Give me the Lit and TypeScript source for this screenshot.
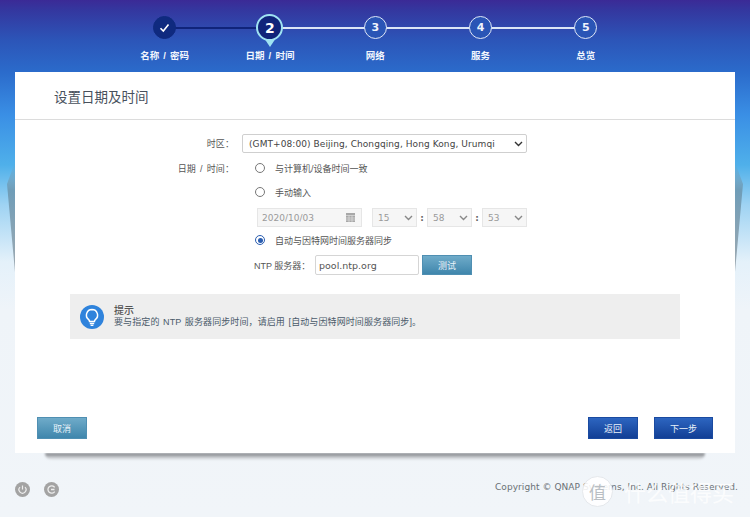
import { LitElement, html, css, svg } from "lit";
import { customElement } from "lit/decorators.js";

const CN = css`"Liberation Sans","Noto Sans CJK SC",sans-serif`;
const steps = [
  { n: "✓", label: "名称 / 密码", cls: "done" },
  { n: "2", label: "日期 / 时间", cls: "cur" },
  { n: "3", label: "网络", cls: "" },
  { n: "4", label: "服务", cls: "" },
  { n: "5", label: "总览", cls: "" },
];

@customElement("app-root")
export class AppRoot extends LitElement {
  static styles = css`
    :host { display: block; width: 750px; height: 517px; overflow: hidden; position: relative;
      font-family: "DejaVu Sans", "Noto Sans CJK SC", sans-serif; color: #444; }
    * { box-sizing: border-box; }
    .page { width: 750px; height: 517px; display: flex; flex-direction: column;
      background: linear-gradient(180deg, #3b2a96 0, #34379f 10px, #2c55b8 40px, #2b6bcb 72px, #3a8fe5 115px, #4fb0ea 165px, #9fd3f3 205px, #e4f1fa 262px, #eff4f9 310px, #f1f5f9 100%); }
    .wizard { height: 72px; flex: none; display: flex; padding-left: 112px; padding-top: 15px; }
    .step { width: 105.3px; flex: none; display: flex; flex-direction: column; align-items: center; position: relative; }
    .dot { width: 23px; height: 23px; border-radius: 50%; border: 1.5px solid #dfe7f7; color: #eef3fc;
      font: bold 11px "DejaVu Sans", sans-serif; display: flex; align-items: center; justify-content: center;
      background: #2a55b6; position: relative; z-index: 2; margin-top: 1px; }
    .done .dot { background: #0f2a7f; border-color: #0f2a7f; }
    .cur .dot { width: 27px; height: 27px; background: #10247a; border: 2px solid #9fe3f2; color: #fff; font-size: 14px; margin-top: -1px; }
    .pin { position: absolute; left: 50%; top: 20px; margin-left: -8px; width: 0; height: 0;
      border-left: 8px solid transparent; border-right: 8px solid transparent; border-top: 12px solid #9fe3f2; z-index: 1; }
    .link { position: absolute; left: 50%; width: 105.3px; top: 12px; height: 2px; background: #dbe6f6; }
    .done .link { background: #10247a; }
    .lbl { position: absolute; top: 33px; white-space: nowrap; font: bold 9.5px ${CN}; color: #f2f6fd; word-spacing: 1.5px; }
    .card { width: 720px; margin-left: 15px; height: 381px; flex: none; background: #fff; display: flex; flex-direction: column; position: relative; z-index: 1; }
    .card::before, .card::after { content: ""; position: absolute; top: 90px; width: 8px; height: 110px; z-index: -1;
      background: linear-gradient(180deg, #5aa8dc00, #6f9db8 25%, #a0aab1 100%); }
    .card::before { left: -8px; clip-path: polygon(100% 0, 0 20%, 100% 100%); }
    .card::after { right: -8px; clip-path: polygon(0 0, 100% 20%, 0 100%); }
    .shadow { height: 7px; width: 660px; margin-left: 45px; flex: none;
      background: linear-gradient(180deg, #77797d, #c4c7cb 60%, transparent); border-radius: 0 0 8px 8px; filter: blur(1px); }
    .title { height: 48px; flex: none; padding: 16px 0 0 39px; border-bottom: 1px solid #dcdcdc;
      font: 13.5px ${CN}; color: #47505c; line-height: 20px; }
    .form { padding: 14px 0 0 0; display: flex; flex-direction: column; flex: none; height: 149px; }
    .row { display: flex; align-items: center; }
    .rowdt { height: 26px; margin-top: 3px; }
    .k { width: 219px; text-align: right; font: 9px ${CN}; color: #555; flex: none; word-spacing: 1.5px; letter-spacing: .1px; }
    .sel { border: 1px solid #cfcfcf; background: #fff; border-radius: 2px; display: flex; align-items: center; justify-content: space-between;
      font: 9px "DejaVu Sans", sans-serif; color: #444; letter-spacing: .08px; }
    .tz { width: 285px; height: 19px; margin-left: 8px; padding: 0 3px 0 6px; }
    .chev { width: 9px; height: 6px; flex: none; }
    .r { height: 24px; margin-left: 240px; display: flex; align-items: center; gap: 10px; font: 9px ${CN}; color: #555; }
    .r.first { margin-left: 8px; padding-left: 13px; }
    .r.auto { margin-top: 1px; }
    .radio { width: 10px; height: 10px; border: 1px solid #777; border-radius: 50%; display: flex; align-items: center; justify-content: center; background: #fff; }
    .radio.on { border-color: #2a5db0; }
    .radio.on::after { content: ""; width: 5px; height: 5px; border-radius: 50%; background: #2a5db0; }
    .dis { margin: 4px 0 0 240px; height: 19px; gap: 0; padding-left: 2px; }
    .date { width: 105px; height: 19px; background: #f6f6f6; border: 1px solid #e6e6e6; font: 9px "DejaVu Sans", sans-serif; color: #9a9a9a;
      display: flex; align-items: center; justify-content: space-between; padding: 0 6px 0 4px; margin-right: 10px; }
    .t { width: 45px; height: 19px; background: #f6f6f6; border: 1px solid #e6e6e6; font: 9px "DejaVu Sans", sans-serif; color: #9a9a9a;
      display: flex; align-items: center; justify-content: space-between; padding: 0 3px 0 5px; }
    .colon { width: 10px; text-align: center; font: bold 9px "DejaVu Sans", sans-serif; color: #666; }
    .ntp { margin-top: 3px; padding-left: 239px; }
    .ntp .nk { font: 9px ${CN}; color: #555; width: 61px; flex: none; }
    .inp { width: 104px; height: 20px; border: 1px solid #d5d5d5; border-radius: 2px; background: #fff; font: 9.5px "DejaVu Sans", sans-serif; color: #555;
      display: flex; align-items: center; padding-left: 3px; margin-right: 3px; }
    .btn { display: flex; align-items: center; justify-content: center; color: #eaf3fa; font: 9px ${CN}; border: 1px solid transparent; height: 20px; width: 50px; flex: none; }
    .btn.wide { width: 59px; }
    .tealb { background: linear-gradient(180deg, #6fabc9, #3f86ac); border-color: #4f8fb2; }
    .blueb { background: linear-gradient(180deg, #2d65c0, #123f95); border-color: #1a4aa0; }
    .tip { margin: 25px 0 0 55px; width: 610px; height: 45px; background: #eeeeee; display: flex; align-items: center; padding-left: 10px; flex: none; }
    .tip svg { width: 24px; height: 24px; flex: none; }
    .tiptxt { margin-left: 10px; display: flex; flex-direction: column; font: 9px ${CN}; color: #4a5a6a; line-height: 11px; letter-spacing: .1px; word-spacing: 1px; }
    .tiptxt b { font-weight: 500; font-size: 10px; color: #555; margin-bottom: 1px; }
    .acts { flex: 1; display: flex; align-items: flex-end; justify-content: space-between; padding: 0 22px 14px 22px; }
    .acts .btn { height: 22px; }
    .right { display: flex; gap: 16px; }
    .foot { flex: 1; display: flex; justify-content: space-between; align-items: flex-start; padding: 22px 0 0 15px; position: relative; }
    .ic { display: flex; gap: 14px; }
    .ic svg { width: 15px; height: 15px; }
    .copy { font: 9px "DejaVu Sans", sans-serif; color: #6b7176; position: absolute; left: 495px; top: 22px; white-space: nowrap; letter-spacing: .06px; }
    .mark { position: absolute; left: 582px; top: 15px; display: flex; align-items: center; gap: 11px; color: #ffffffc4; font: 22px ${CN}; white-space: nowrap; }
    .mark i { width: 31px; height: 31px; border-radius: 50%; background: #ffffffe0; display: flex; align-items: center; justify-content: center; font-style: normal; font-size: 17px; color: #b9bec4; border: 1px solid #e5e8ec; }
  `;

  private chev(c = "#333") {
    return html`<svg class="chev" viewBox="0 0 9 6">${svg`<path d="M1 1l3.5 3.5L8 1" fill="none" stroke=${c} stroke-width="1.4"/>`}</svg>`;
  }

  render() {
    return html`<div class="page">
      <div class="wizard">
        ${steps.map((s, i) => html`<div class="step ${s.cls}">
          ${i < 4 ? html`<div class="link"></div>` : ""}
          ${s.cls === "cur" ? html`<div class="pin"></div>` : ""}
          <div class="dot">${s.cls === "done"
            ? html`<svg width="11" height="10" viewBox="0 0 11 10"><path d="M1.5 5.2l2.8 2.8 5.2-6.4" fill="none" stroke="#fff" stroke-width="1.6"/></svg>`
            : s.n}</div>
          <div class="lbl">${s.label}</div>
        </div>`)}
      </div>
      <div class="card">
        <div class="title">设置日期及时间</div>
        <div class="form">
          <div class="row"><div class="k">时区：</div><div class="sel tz">(GMT+08:00) Beijing, Chongqing, Hong Kong, Urumqi ${this.chev()}</div></div>
          <div class="row rowdt"><div class="k">日期 / 时间：</div>
            <div class="r first"><span class="radio"></span>与计算机/设备时间一致</div></div>
          <div class="row"><div class="r"><span class="radio"></span>手动输入</div></div>
          <div class="row dis">
            <div class="date"><span>2020/10/03</span>
              <svg width="9" height="9" viewBox="0 0 9 9"><rect width="9" height="9" fill="#a8a8a8"/><path d="M0 2.5h9M3 2.5v6.5M6 2.5v6.5M0 5h9M0 7h9" stroke="#e8e8e8" stroke-width=".6"/></svg></div>
            <div class="t">15 ${this.chev("#888")}</div><div class="colon">:</div>
            <div class="t">58 ${this.chev("#888")}</div><div class="colon">:</div>
            <div class="t">53 ${this.chev("#888")}</div>
          </div>
          <div class="row"><div class="r auto"><span class="radio on"></span>自动与因特网时间服务器同步</div></div>
          <div class="row ntp"><div class="nk">NTP 服务器：</div><div class="inp">pool.ntp.org</div><div class="btn tealb">测试</div></div>
        </div>
        <div class="tip">
          <svg viewBox="0 0 24 24"><circle cx="12" cy="12" r="12" fill="#2f83dc"/><path d="M12 4.5a5.6 5.6 0 0 0-3.3 10.1c.7.6.9 1.1.9 2h4.8c0-.9.2-1.4.9-2A5.6 5.6 0 0 0 12 4.5z" fill="none" stroke="#fff" stroke-width="1.5"/><path d="M9.8 18.5h4.4M10.6 20.3h2.8" stroke="#fff" stroke-width="1.3"/></svg>
          <div class="tiptxt"><b>提示</b><span>要与指定的 NTP 服务器同步时间，请启用 [自动与因特网时间服务器同步]。</span></div>
        </div>
        <div class="acts">
          <div class="btn tealb">取消</div>
          <div class="right"><div class="btn blueb">返回</div><div class="btn blueb wide">下一步</div></div>
        </div>
      </div>
      <div class="shadow"></div>
      <div class="foot">
        <div class="ic">
          <svg viewBox="0 0 15 15"><circle cx="7.5" cy="7.5" r="7.5" fill="#a3a3a3"/><path d="M5 5.2a3.5 3.5 0 1 0 5 0M7.5 3.5v4" fill="none" stroke="#eee" stroke-width="1.2"/></svg>
          <svg viewBox="0 0 15 15"><circle cx="7.5" cy="7.5" r="7.5" fill="#a3a3a3"/><path d="M10.7 5.4a3.7 3.7 0 1 0 0 4.2M7 7.5h3.5" fill="none" stroke="#eee" stroke-width="1.3"/></svg>
        </div>
        <div class="copy">Copyright © QNAP Systems, Inc. All Rights Reserved.</div>
        <div class="mark"><i>值</i><span>什么值得买</span></div>
      </div>
    </div>`;
  }
}
